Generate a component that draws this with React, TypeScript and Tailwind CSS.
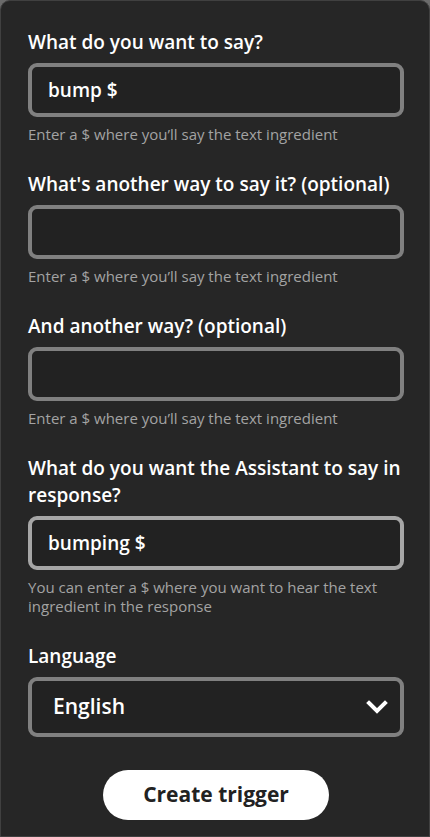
import React from "react";

const font = { fontFamily: "'Open Sans', 'Noto Sans', sans-serif" };

function Field({ label, value, helper, focused }: { label: React.ReactNode; value?: string; helper: React.ReactNode; focused?: boolean }) {
  return (
    <div className="flex flex-col">
      <div className="text-[19px] leading-[27px] font-semibold text-white mb-[7px]">{label}</div>
      <div
        className={`h-[54px] rounded-[9px] border-[4px] ${focused ? "border-[#a6a6a6]" : "border-[#808080]"} bg-[#222222] flex items-center px-[16px]`}
      >
        <span className="text-[19px] font-semibold text-white">{value}</span>
      </div>
      <div className="mt-[8px] text-[15px] leading-[19px] text-[#a3a3a3]">{helper}</div>
    </div>
  );
}

export default function App() {
  return (
    <div className="w-[430px] h-[837px] bg-[#6b6b6b] overflow-hidden" style={font}>
      <div className="h-full rounded-t-[10px] bg-[#262626] border border-[#404040] pl-[27px] pr-[25px] pt-[28px] flex flex-col gap-[27px]">
        <Field label="What do you want to say?" value="bump $" helper="Enter a $ where you’ll say the text ingredient" />
        <Field label="What's another way to say it? (optional)" helper="Enter a $ where you’ll say the text ingredient" />
        <Field label="And another way? (optional)" helper="Enter a $ where you’ll say the text ingredient" />
        <Field
          label="What do you want the Assistant to say in response?"
          value="bumping $"
          focused
          helper="You can enter a $ where you want to hear the text ingredient in the response"
        />
        <div className="flex flex-col">
          <div className="text-[19px] leading-[27px] font-semibold text-white mb-[7px]">Language</div>
          <div className="h-[60px] rounded-[9px] border-[4px] border-[#808080] bg-[#222222] flex items-center justify-between pl-[21px] pr-[12px]">
            <span className="text-[21px] font-semibold text-white">English</span>
            <svg width="22" height="16" viewBox="0 0 22 16" fill="none">
              <path d="M3 4 L11 12 L19 4" stroke="white" strokeWidth="4" strokeLinecap="square" />
            </svg>
          </div>
          <div className="flex justify-center mt-[33px]">
            <button className="w-[226px] h-[50px] rounded-full bg-white text-[#222222] text-[21px] font-bold">
              Create trigger
            </button>
          </div>
        </div>
      </div>
    </div>
  );
}
